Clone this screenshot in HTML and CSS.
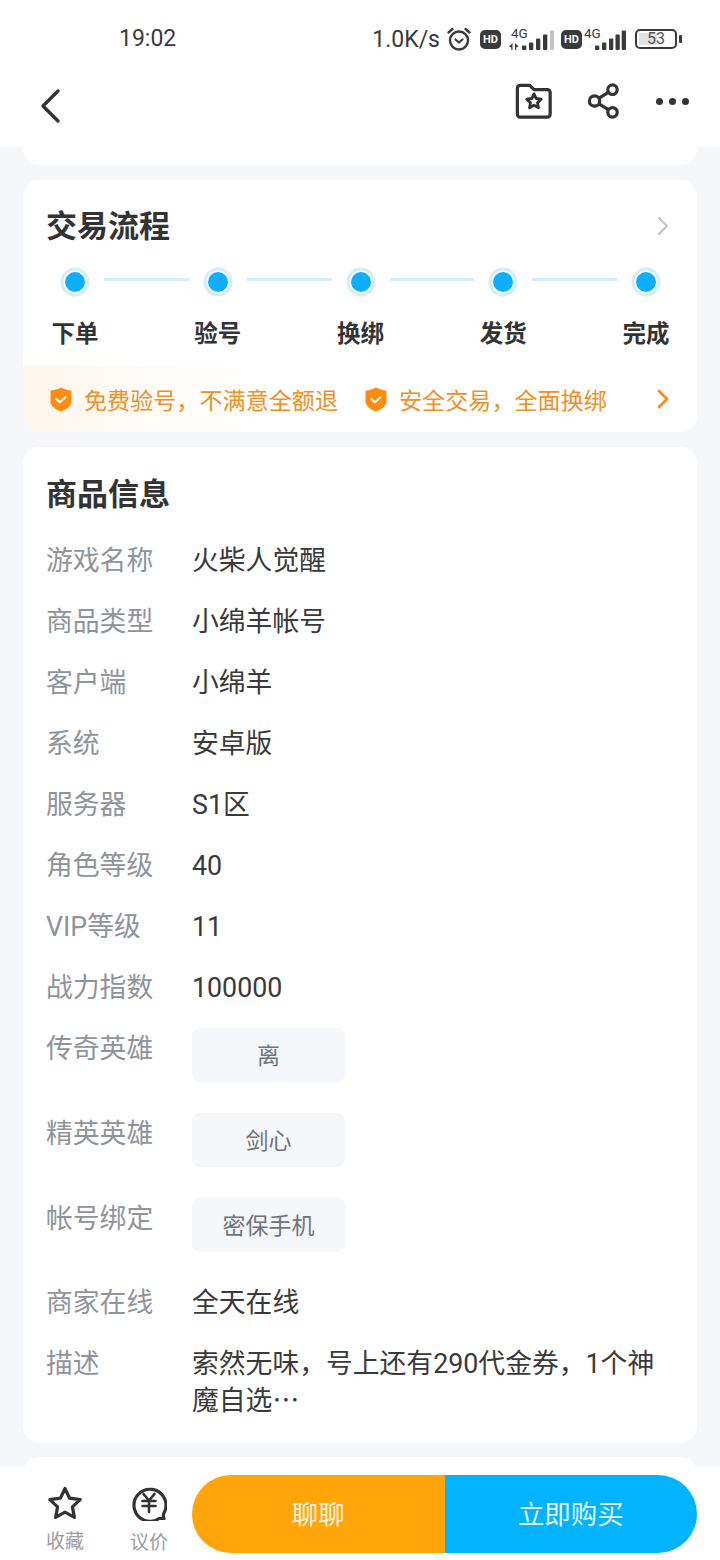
FILE: index.html
```html
<!DOCTYPE html>
<html lang="zh-CN">
<head>
    <meta charset="UTF-8">
    <meta name="viewport" content="width=device-width, initial-scale=1.0">
    <title>商品详情</title>
    <link rel="stylesheet" href="styles.css">
</head>
<body>
<div class="page">

    <!-- Status bar -->
    <div class="status-bar">
        <span class="clock">19:02</span>
        <div class="status-right">
            <span class="speed">1.0K/s</span>
            <svg width="26" height="26" viewBox="0 0 26 26" fill="none" stroke="#3a3a3a" stroke-linecap="round" stroke-linejoin="round">
                <circle cx="13" cy="14.5" r="9" stroke-width="2.4"/>
                <path d="M9.5 13.5 13 16.5l3.5-3" stroke-width="2.2"/>
                <path d="M2.5 6.5 6.5 3M23.5 6.5 19.500 3" stroke-width="2.4"/>
            </svg>
            <span class="hd hd-first">HD</span>
            <svg width="45" height="29" viewBox="0 -3 45 29">
                <text x="2" y="9.500" class="st-4g">4G</text>
                <g fill="#3a3a3a">
                    <path d="M3.500 15v7H2.300v-2.500L0 18.500zM6 15v7h1.200v-2.500l2.300-1z"/>
                    <rect x="13" y="17.500" width="4.300" height="4.500" rx="1"/>
                    <rect x="20" y="14.500" width="4.300" height="7.500" rx="1"/>
                    <rect x="27" y="10.500" width="4.300" height="11.500" rx="1"/>
                    <rect x="34" y="6.500" width="4.300" height="15.500" rx="1"/>
                </g>
                <rect x="41" y="2.500" width="4" height="19.500" rx="1" fill="#c4c4c4"/>
            </svg>
            <span class="hd hd-second">HD</span>
            <svg width="42" height="29" viewBox="0 -3 42 29">
                <text x="0" y="9.500" class="st-4g">4G</text>
                <g fill="#3a3a3a">
                    <rect x="11" y="17.500" width="4.300" height="4.500" rx="1"/>
                    <rect x="18" y="14.500" width="4.300" height="7.500" rx="1"/>
                    <rect x="25" y="10.500" width="4.300" height="11.500" rx="1"/>
                    <rect x="31.500" y="6.500" width="4.300" height="15.500" rx="1"/>
                    <rect x="37.700" y="2.500" width="4.300" height="19.500" rx="1"/>
                </g>
            </svg>
            <div class="battery">
                <div class="battery-body">
                    <div class="battery-fill"></div>
                    <span class="battery-num">53</span>
                </div>
                <div class="battery-cap"></div>
            </div>
        </div>
    </div>

    <!-- Title bar -->
    <div class="nav-bar">
        <svg class="nav-back" width="24" height="36" viewBox="0 0 24 36" fill="none" stroke="#333" stroke-width="3.400" stroke-linecap="round" stroke-linejoin="round">
            <path d="M19 3 4 18l15 15"/>
        </svg>
        <div class="nav-actions">
            <svg width="40" height="38" viewBox="0 0 40 40" fill="none" stroke="#333" stroke-linejoin="round">
                <path d="M2.500 6.500a3 3 0 0 1 3-3h10l4.500 4.500h14a3 3 0 0 1 3 3v23a3 3 0 0 1-3 3h-28.500a3 3 0 0 1-3-3z" stroke-width="3.400"/>
                <path d="m20 12.500 2.300 4.900 5.300.7-3.900 3.700 1 5.300-4.700-2.600-4.700 2.600 1-5.300-3.900-3.700 5.300-.7z" stroke-width="3"/>
            </svg>
            <svg width="34" height="36" viewBox="0 0 36 38" fill="none" stroke="#333" stroke-width="3.400">
                <circle cx="8" cy="19" r="5.500"/>
                <circle cx="27" cy="7" r="5"/>
                <circle cx="27" cy="31" r="5"/>
                <path d="m12.800 16 9.800-6.200M12.800 22l9.800 6.200"/>
            </svg>
            <div class="dots"><i></i><i></i><i></i></div>
        </div>
    </div>

    <div class="content">
        <div class="card card-tail"></div>

        <!-- Trade flow -->
        <div class="card flow-card">
            <div class="card-head">
                <h2 class="card-title">交易流程</h2>
                <svg width="12" height="20" viewBox="0 0 12 20" fill="none" stroke="#c2c2c2" stroke-width="2.200" stroke-linecap="round" stroke-linejoin="round"><path d="m2 2 8 8-8 8"/></svg>
            </div>
            <div class="steps">
                <div class="step"><span class="dot"></span><span class="step-name">下单</span></div>
                <span class="step-line"></span>
                <div class="step"><span class="dot"></span><span class="step-name">验号</span></div>
                <span class="step-line"></span>
                <div class="step"><span class="dot"></span><span class="step-name">换绑</span></div>
                <span class="step-line"></span>
                <div class="step"><span class="dot"></span><span class="step-name">发货</span></div>
                <span class="step-line"></span>
                <div class="step"><span class="dot"></span><span class="step-name">完成</span></div>
            </div>
            <div class="promise">
                <div class="promise-item">
                    <svg width="22" height="25" viewBox="0 0 22 25"><path d="M11 0.500c3 1.800 6.500 2.800 10.500 3v11c0 4.500-5 8-10.500 10C5.500 22.500.5 19 .5 14.500v-11c4-.2 7.500-1.200 10.500-3z" fill="#ff8c12"/><path d="m6.500 12 3.200 3.200 5.800-5" fill="none" stroke="#fff" stroke-width="2" stroke-linecap="round" stroke-linejoin="round"/></svg>
                    <span>免费验号，不满意全额退</span>
                </div>
                <div class="promise-item">
                    <svg width="22" height="25" viewBox="0 0 22 25"><path d="M11 0.500c3 1.800 6.500 2.800 10.500 3v11c0 4.500-5 8-10.500 10C5.500 22.500.5 19 .5 14.500v-11c4-.2 7.500-1.200 10.500-3z" fill="#ff8c12"/><path d="m6.500 12 3.200 3.200 5.800-5" fill="none" stroke="#fff" stroke-width="2" stroke-linecap="round" stroke-linejoin="round"/></svg>
                    <span>安全交易，全面换绑</span>
                </div>
                <svg class="promise-arrow" width="12" height="20" viewBox="0 0 12 20" fill="none" stroke="#ff8c12" stroke-width="2.800" stroke-linecap="round" stroke-linejoin="round"><path d="m2 2 8 8-8 8"/></svg>
            </div>
        </div>

        <!-- Goods info -->
        <div class="card info-card">
            <h2 class="card-title">商品信息</h2>
            <div class="info-list">
                <div class="info-row"><span class="info-label">游戏名称</span><span class="info-value">火柴人觉醒</span></div>
                <div class="info-row"><span class="info-label">商品类型</span><span class="info-value">小绵羊帐号</span></div>
                <div class="info-row"><span class="info-label">客户端</span><span class="info-value">小绵羊</span></div>
                <div class="info-row"><span class="info-label">系统</span><span class="info-value">安卓版</span></div>
                <div class="info-row"><span class="info-label">服务器</span><span class="info-value">S1区</span></div>
                <div class="info-row"><span class="info-label">角色等级</span><span class="info-value">40</span></div>
                <div class="info-row"><span class="info-label">VIP等级</span><span class="info-value">11</span></div>
                <div class="info-row"><span class="info-label">战力指数</span><span class="info-value">100000</span></div>
                <div class="info-row"><span class="info-label">传奇英雄</span><span class="chip">离</span></div>
                <div class="info-row"><span class="info-label">精英英雄</span><span class="chip">剑心</span></div>
                <div class="info-row"><span class="info-label">帐号绑定</span><span class="chip chip-last">密保手机</span></div>
                <div class="info-row"><span class="info-label">商家在线</span><span class="info-value">全天在线</span></div>
                <div class="info-row"><span class="info-label">描述</span><span class="info-value">索然无味，号上还有290代金券，1个神魔自选⋯</span></div>
            </div>
        </div>

        <div class="card card-next"></div>
    </div>

    <!-- Bottom actions -->
    <div class="bottom-bar">
        <div class="bar-icon bar-fav">
            <svg width="36" height="34" viewBox="0 0 36 34" fill="none" stroke="#333" stroke-width="3.200" stroke-linejoin="round">
                <path d="m18 2.500 4.600 9.700 10.600 1.400-7.800 7.300 2 10.500-9.400-5.200-9.400 5.200 2-10.500-7.800-7.300 10.600-1.400z"/>
            </svg>
            <span>收藏</span>
        </div>
        <div class="bar-icon bar-bargain">
            <svg width="36" height="36" viewBox="0 0 36 36" fill="none" stroke="#333" stroke-linecap="round" stroke-linejoin="round">
                <path d="M33 33.500h-5a16 16 0 1 1 5-5.500c-.8 1.800-1 3.500 0 5.500z" stroke-width="3.200"/>
                <path d="m12.500 9 5.500 6.500L23.500 9M11.500 16h13M11.500 21h13M18 15.500V27" stroke-width="2.600"/>
            </svg>
            <span>议价</span>
        </div>
        <div class="bar-buttons">
            <div class="btn btn-chat">聊聊</div>
            <div class="btn btn-buy">立即购买</div>
        </div>
    </div>
</div>
</body>
</html>
```

FILE: styles.css
```css
* {
    box-sizing: border-box;
}

body {
    margin: 0;
    background-color: #f5f7fb;
    font-family: Roboto, 'Noto Sans CJK SC', sans-serif;
    color: #333;
}

.page {
    position: relative;
    width: 720px;
    height: 1560px;
    overflow: hidden;
}

.status-bar {
    height: 66px;
    padding: 14px 38px 0 119px;
    display: flex;
    justify-content: space-between;
    align-items: flex-start;
    background-color: #fff;
    color: #3a3a3a;
}

.clock {
    font-size: 23px;
    line-height: 50px;
}

.status-right {
    display: flex;
    align-items: center;
    height: 50px;
}

.speed {
    font-size: 23px;
    margin-right: 6px;
}

.st-4g {
    font-family: Roboto, sans-serif;
    font-size: 13.500px;
    fill: #3a3a3a;
}

.hd {
    width: 21px;
    height: 19px;
    border-radius: 5px;
    background-color: #3a3a3a;
    color: #fff;
    font-size: 11px;
    font-weight: 700;
    line-height: 19px;
    text-align: center;
}

.hd-first {
    margin-left: 8px;
    margin-right: 8px;
}

.hd-second {
    margin-left: 7px;
    margin-right: 2px;
}

.battery {
    display: flex;
    align-items: center;
    margin-left: 9px;
}

.battery-body {
    position: relative;
    width: 42px;
    height: 20px;
    border: 2px solid #3a3a3a;
    border-radius: 5px;
    padding: 2px;
}

.battery-fill {
    width: 53%;
    height: 100%;
    background-color: #e2e2e2;
}

.battery-num {
    position: absolute;
    left: 0;
    right: 0;
    top: -2px;
    text-align: center;
    font-size: 16px;
    line-height: 20px;
    color: #555;
}

.battery-cap {
    width: 3px;
    height: 8px;
    margin-left: 2px;
    border-radius: 1px;
    background-color: #3a3a3a;
}

.nav-bar {
    height: 80px;
    padding: 0 31px 10px 39px;
    display: flex;
    justify-content: space-between;
    align-items: center;
    background-color: #fff;
}

.nav-back {
    margin-top: 10px;
}

.nav-actions {
    display: flex;
    align-items: center;
    gap: 33px;
}

.dots {
    display: flex;
    gap: 6px;
    margin-left: 2px;
}

.dots i {
    width: 7px;
    height: 7px;
    border-radius: 50%;
    background-color: #333;
}

.content {
    padding: 0 23px;
    display: flex;
    flex-direction: column;
    gap: 15px;
}

.card {
    background-color: #fff;
    border-radius: 16px;
}

.card-tail {
    height: 19px;
    border-radius: 0 0 16px 16px;
}

.card-title {
    margin: 0;
    font-size: 31px;
    font-weight: 700;
    line-height: 40px;
}

.flow-card {
    height: 252px;
    overflow: hidden;
}

.card-head {
    display: flex;
    justify-content: space-between;
    align-items: center;
    padding: 26px 28px 0 23px;
}

.card-head .card-title {
    padding-top: 1px;
    height: 40px;
}

.steps {
    display: flex;
    align-items: flex-start;
    height: 120px;
    padding: 21px 24px 0 25px;
}

.step {
    width: 54px;
    display: flex;
    flex-direction: column;
    align-items: center;
    gap: 26px;
}

.dot {
    width: 20px;
    height: 20px;
    margin-top: 5px;
    border-radius: 50%;
    background-color: #0eaeff;
    box-shadow: 0 0 0 1.500px #fff, 0 0 0 4.500px #d3edfb;
}

.step-name {
    font-size: 23.500px;
    font-weight: 700;
    line-height: 32px;
    white-space: nowrap;
}

.step-line {
    flex: 1;
    height: 3px;
    margin: 11px 2px 0;
    background-color: #d5edf9;
}

.promise {
    height: 66px;
    padding: 0 28px 0 27px;
    display: flex;
    align-items: center;
    gap: 27px;
    background: linear-gradient(90deg, #fff6ec, #fff 34%);
    color: #f08f25;
    font-size: 23.100px;
}

.promise-item {
    display: flex;
    align-items: center;
    gap: 12px;
    white-space: nowrap;
}

.promise-arrow {
    margin-left: auto;
}

.info-card {
    height: 995px;
    padding: 28px 23px 0;
}

.info-list {
    margin-top: 28px;
}

.info-row {
    display: flex;
    align-items: flex-start;
    margin-bottom: 24px;
    font-size: 26.800px;
    line-height: 37px;
}

.info-label {
    flex: 0 0 146px;
    color: #8f949b;
}

.info-value {
    flex: 1;
    color: #3a3a3a;
}

.chip {
    width: 153px;
    height: 54px;
    margin: -3px 0 10px;
    border-radius: 8px;
    background-color: #f5f7fb;
    color: #6f747b;
    font-size: 23px;
    line-height: 58px;
    text-align: center;
}

.chip-last {
    margin-bottom: 9px;
}

.card-next {
    height: 60px;
}

.bottom-bar {
    position: absolute;
    left: 0;
    right: 0;
    bottom: 0;
    height: 94px;
    padding: 9px 23px 0 0;
    display: flex;
    align-items: flex-start;
    background-color: #fff;
}

.bar-icon {
    display: flex;
    flex-direction: column;
    align-items: center;
    color: #9a9ea5;
    font-size: 19px;
    line-height: 26px;
}

.bar-icon svg {
    margin-bottom: 9px;
}

.bar-fav {
    width: 66px;
    margin-left: 32px;
    padding-top: 11px;
}

.bar-bargain {
    width: 66px;
    margin-left: 18px;
    padding-top: 10px;
}

.bar-buttons {
    margin-left: 10px;
    flex: 1;
    height: 78px;
    display: flex;
    border-radius: 39px;
    overflow: hidden;
}

.btn {
    flex: 1;
    color: rgba(255, 255, 255, 0.92);
    font-size: 26.400px;
    line-height: 80px;
    text-align: center;
}

.btn-chat {
    background-color: #ffa50a;
}

.btn-buy {
    background-color: #02b4ff;
}
```
